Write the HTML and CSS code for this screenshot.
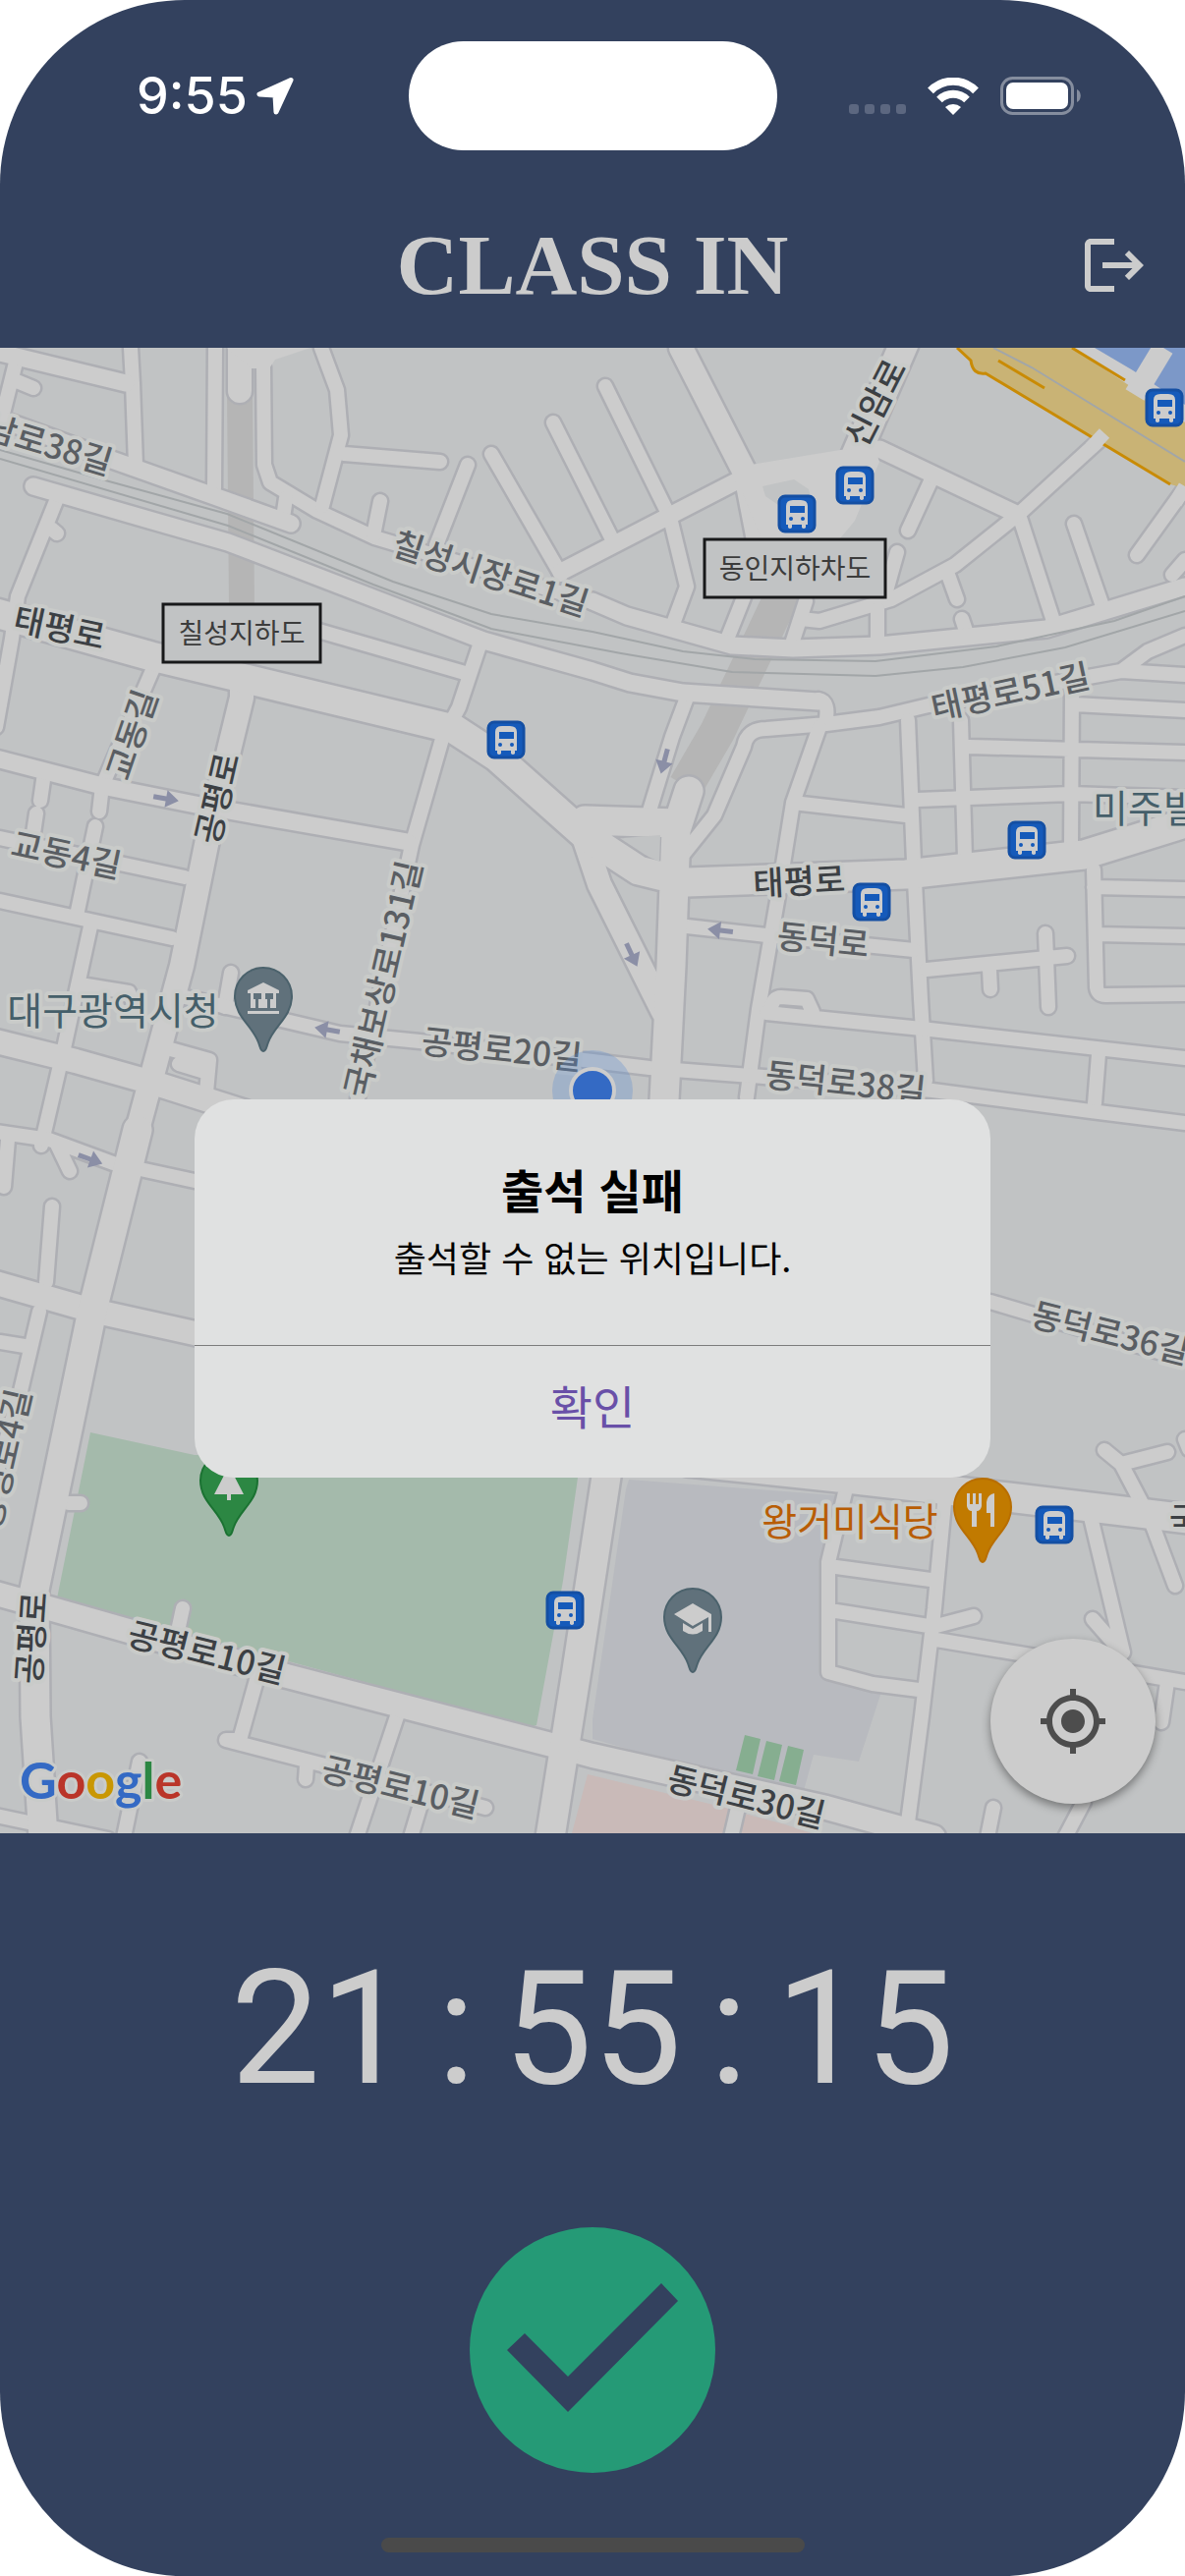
FILE: index.html
```html
<!DOCTYPE html>
<html lang="ko">
<head>
<meta charset="utf-8">
<meta name="viewport" content="width=device-width, initial-scale=1">
<title>CLASS IN</title>
<link rel="stylesheet" href="styles.css">
</head>
<body>
<div class="phone">
  <header class="header">
    <div class="status">
      <div class="status-left">
        <time class="status-time">9:55</time>
        <svg class="icon-location" viewBox="0 0 40 40" aria-hidden="true"><path d="M36 3.500L4 18L20 19L21 36Z"/></svg>
      </div>
      <div class="island"></div>
      <div class="status-right">
        <svg class="icon-signal" viewBox="0 0 58 10" aria-hidden="true"><rect width="10" height="10" rx="3"/><rect x="16" width="10" height="10" rx="3"/><rect x="32" width="10" height="10" rx="3"/><rect x="48" width="10" height="10" rx="3"/></svg>
        <svg class="icon-wifi" viewBox="0 0 52 38" aria-hidden="true"><path class="wave" d="M3 13.400A32 32 0 0 1 49 13.400"/><path class="wave" d="M12 22.500A20 20 0 0 1 40 22.500"/><path class="wave-dot" d="M26 38L18 30A12 12 0 0 1 34 30Z"/></svg>
        <svg class="icon-battery" viewBox="0 0 82 39" aria-hidden="true"><rect class="shell" x="1.500" y="1.500" width="72" height="36" rx="11"/><rect class="charge" x="6" y="6" width="63" height="27" rx="7"/><path class="nub" d="M78 13C83 15 83 24 78 26Z"/></svg>
      </div>
    </div>
    <div class="app-bar">
      <h1 class="brand">CLASS IN</h1>
      <button class="logout" type="button" aria-label="로그아웃"><svg viewBox="0 0 24 24"><path d="M17 7l-1.410 1.410L18.170 11H8v2h10.170l-2.580 2.580L17 17l5-5zM4 5h8V3H4c-1.100 0-2 .9-2 2v14c0 1.100.9 2 2 2h8v-2H4V5z"/></svg></button>
    </div>
  </header>

  <main class="map">
    <svg class="map-canvas" viewBox="0 354 1206 1512" role="img" aria-label="지도">
      <defs>
        <g id="bus">
          <rect class="bus-box" x="-18" y="-18" width="36" height="36" rx="6"/>
          <path class="bus-body" d="M-11 -8Q-11 -14 -4 -14H4Q11 -14 11 -8V11H9V14Q7 16 5 14V11H-5V14Q-7 16 -9 14V11H-11Z"/>
          <rect class="bus-glass" x="-7" y="-8" width="15" height="7"/>
          <circle class="bus-glass" cx="-6" cy="5" r="2"/><circle class="bus-glass" cx="6" cy="5" r="2"/>
        </g>
        <path id="pin" d="M0 -1C-3 -1 -3 -5 -5 -10C-11 -27 -29 -36 -29 -57A29 29 0 0 1 29 -57C29 -36 11 -27 5 -10C3 -5 3 -1 0 -1Z"/>
        <path id="arrow" d="M-13 -2.500H0V-9L13 0L0 9V2.500H-13Z"/>
        <g id="roads">
          <path class="r14" d="M17 365L2 425M17 388L34 395M133 354L135 390L138 473M219 354L218 497M268 373L269 473L275 491L323 520L381 547L603 613"/>
          <path class="r14" d="M291 507L288 527M57 510L18 607L12 650L-4 740M52 538L58 543M300 635L473 685M488 657L467 720L450 752L419 860L364 1118"/>
          <path class="r14" d="M156 680L104 800L101 826M97 841L79 927M92 943L65 1067L42 1166M45 787L41 815M37 828L33 855M0 853L188 893M0 917L175 955M88 1003L131 1010L140 1030M235 990L229 1025"/>
          <path class="r14" d="M327 354L343 397L347 443L328 515M350 462L448 470M387 510L380 545M476 473L444 555M500 462L571 585M563 430L622 547M616 393L682 527L699 597L685 635"/>
          <path class="r14" d="M947 490L924 540M1120 447L1037 523L972 575L907 610L834 632L815 630M913 562L899 612M965 585L974 610M979 630L984 645M1038 527L1072 632M1093 533L1122 617M1206 497L1157 565M1206 570L1193 585"/>
          <path class="r14" d="M757 608L741 648M820 612L807 652M893 620L893 650M699 710L684 750L658 835M757 760L727 830L695 870M757 760Q760 742 780 742L841 737L895 730L945 718L1141 683L1168 663L1206 647M1141 683L1206 687M833 712Q845 714 840 737"/>
          <path class="r14" d="M1093 717L1206 723M1091 705L1090 860M978 733L982 873M924 733L930 877L937 1017L942 1100M834 740L807 817L791 917L772 1027L760 1117M807 817L922 830M934 814L1090 808L1206 812M986 760L1206 766"/>
          <path class="r14" d="M699 943L780 952L930 967M943 987L1086 973M1064 950L1067 1025M1007 987L1008 1007M1113 885L1116 1005Q1117 1013 1125 1013L1206 1012M1113 903L1206 905M1117 951L1206 953M780 1031L938 1047L1206 1077M785 1027Q786 1015 795 1015L821 1017L827 1030M1118 1073L1114 1123"/>
          <path class="r14" d="M180 1013L346 1052L427 1060L603 1080L661 1087L765 1095L949 1110L1110 1131L1206 1143M170 1067L213 1079L210 1112M182 1083L205 1090M-4 1152L50 1160L115 1184L198 1202M58 1165L71 1192M8 1160L4 1208M53 1228L47 1305"/>
          <path class="r14" d="M40 1335L20 1420L-10 1520M0 1366L25 1370M186 1637L181 1660M70 1530L82 1530M261 1710L244 1771L230 1771L331 1797L494 1840M312 1797L311 1811M404 1747L363 1870M430 1830L418 1870M142 1793L126 1870M-4 1848L110 1872"/>
          <path class="r14" d="M861 1515L843 1590L843 1702L888 1714L935 1720M961 1530L951 1637L938 1747L922 1870M851 1595L947 1608M851 1640L945 1655M953 1655L991 1645M953 1669L1049 1685L1206 1712M1109 1540L1143 1682M1112 1648L1140 1680"/>
          <path class="r14" d="M1124 1476L1141 1490L1188 1478M1141 1490L1162 1530M1172 1550L1196 1614M1188 1712L1182 1753M1011 1840L1005 1870M1103 1834L1084 1870M1008 1325L1206 1384M751 1840L744 1870M1206 1465L1210 1475"/>
          <path class="r18" d="M-4 358L128 390M-4 425L111 467L218 505L296 533M34 495L155 530L232 552L492 652L603 683L641 695L695 705L833 714M571 582L753 488M895 457L1034 523M603 612L638 627L688 641L745 657L807 660L895 657L1065 640L1206 597M-4 772L104 800L204 820L415 857"/>
          <path class="r24" d="M693 354L759 483L772 550M246 697L246 710L212 850L185 983L158 1083L140 1150M-4 1060L77 1080L162 1104L250 1132M-4 1306L94 1334L198 1357L620 1450M-4 1622L50 1637L292 1706L565 1777L603 1787L841 1840L950 1870M590 840L610 900L675 1030M244 340L244 398"/>
          <path class="r30" d="M-4 624L154 668L246 690L462 742L505 770L595 850L650 886L699 898L922 890L1103 870L1206 838M920 350L868 470L835 548M701 805L688 845L683 983L676 1120L617 1503L587 1700L560 1870M140 1150L94 1334L35 1618L36 1747L44 1870M700 1488L853 1504L1026 1524L1210 1546M595 835L690 838"/>
        </g>
      </defs>
      <rect class="land" y="354" width="1206" height="1512"/>
      <path class="park" d="M92 1458L198 1481L590 1490L573 1609L546 1756L540 1758L58 1627Z"/>
      <path class="campus" d="M640 1506L850 1522L836 1590L836 1700L897 1722L874 1793L828 1786L816 1830L603 1770L603 1750L637 1516Z"/>
      <path class="pink" d="M598 1806L743 1841L736 1866H582ZM757 1846L799 1857L826 1866H753Z"/>
      <path class="court" d="M758 1766L774 1770L766 1806L749 1802ZM780 1772L796 1776L788 1812L771 1808ZM802 1777L818 1781L810 1817L793 1813Z"/>
      <path class="tunnel-wide" d="M799 600L730 745L698 800"/>
      <path class="tunnel" d="M244 400L246 617"/>
      <use class="casing" href="#roads"/>
      <use class="paving" href="#roads"/>
      <path class="plaza" d="M231 354H316L280 366L274 375H256ZM764 473L855 458L890 455L895 470L870 530L845 560H780L755 500Z"/>
      <path class="island-block" d="M776 495L808 488L823 498L826 510L800 520L792 514L779 505Z"/>
      <path class="island-block" d="M634 853L672 850L671 877L660 872Z"/>
      <path class="rail" d="M0 458L111 490L231 523L400 592L500 625L603 643L695 663L768 671L891 673L1014 658L1134 632L1206 607M0 467L232 535L380 595L500 640L632 665L745 684L891 688L980 679L1084 659L1206 622"/>
      <path class="platform" d="M1091 354H1130L1206 405V430Z"/>
      <path class="water" d="M1114 354H1206V412L1153 377Z"/>
      <path class="highway" d="M974 354L988 367Q990 382 1003 380L1191 493L1206 497V430L1091 354Z"/>
      <path class="highway-edge" d="M974 354L988 367Q990 382 1003 380L1191 493M1091 354L1145 387M1016 367L1063 395"/>
      <path class="rail" d="M1011 354L1050 374L1206 470"/>
      <path class="ramp" d="M1184 354L1155 402"/>
      <path class="ramp-narrow" d="M1124 441L1110 456M1206 495L1196 512"/>

      <g class="flow">
        <use href="#arrow" transform="translate(169 813) rotate(10)"/>
        <use href="#arrow" transform="translate(333 1048) rotate(190)"/>
        <use href="#arrow" transform="translate(676 775) rotate(105)"/>
        <use href="#arrow" transform="translate(733 947) rotate(187)"/>
        <use href="#arrow" transform="translate(643 972) rotate(65)"/>
        <use href="#arrow" transform="translate(92 1180) rotate(20)"/>
      </g>

      <g class="label">
        <text class="end" transform="translate(114 470) rotate(17)">남로38길</text>
        <text transform="translate(500 582) rotate(18)">칠성시장로1길</text>
        <text class="main" transform="translate(61 637) rotate(12)">태평로</text>
        <text transform="translate(132 747) rotate(-71)">교동길</text>
        <text class="main" transform="translate(219 812) rotate(-77)">공평로</text>
        <text transform="translate(68 868) rotate(12)">교동4길</text>
        <text transform="translate(388 996) rotate(-77)">국채보상로131길</text>
        <text transform="translate(511 1066) rotate(6)">공평로20길</text>
        <text class="main" transform="translate(889 409) rotate(-63)">신암로</text>
        <text transform="translate(1028 702) rotate(-12)">태평로51길</text>
        <text class="main" transform="translate(813 895) rotate(-3)">태평로</text>
        <text transform="translate(838 955) rotate(6)">동덕로</text>
        <text transform="translate(861 1100) rotate(6)">동덕로38길</text>
        <text class="start" transform="translate(1051 1335) rotate(14)">동덕로36길</text>
        <text class="main" transform="translate(760 1827) rotate(14)">동덕로30길</text>
        <text class="main" transform="translate(211 1680) rotate(14)">공평로10길</text>
        <text transform="translate(408 1817) rotate(14)">공평로10길</text>
        <text class="main" transform="translate(30 1667) rotate(-86)">공평로</text>
        <text class="end" transform="translate(18 1414) rotate(-77)">공평로4길</text>
        <text class="main start" transform="translate(1190 1544)">국</text>
      </g>
      <g class="place">
        <text transform="translate(115 1026)">대구광역시청</text>
        <text class="start" transform="translate(1112 820)">미주빌</text>
        <text class="food" transform="translate(865 1546)">왕거미식당</text>
      </g>
      <g class="sign">
        <rect x="166" y="615" width="160" height="59"/>
        <text x="246" y="643">칠성지하도</text>
        <rect x="717" y="549" width="184" height="59"/>
        <text x="809" y="577">동인지하차도</text>
      </g>

      <use href="#bus" transform="translate(515 753)"/>
      <use href="#bus" transform="translate(811 523)"/>
      <use href="#bus" transform="translate(870 494)"/>
      <use href="#bus" transform="translate(1185 415)"/>
      <use href="#bus" transform="translate(1045 855)"/>
      <use href="#bus" transform="translate(887 918)"/>
      <use href="#bus" transform="translate(575 1639)"/>
      <use href="#bus" transform="translate(1073 1552)"/>

      <g transform="translate(268 1071)">
        <use class="pin-civic" href="#pin"/>
        <path class="glyph" d="M-16 -63L0 -71L16 -63V-60H-16ZM-13 -60H13V-45H-13ZM-16 -42H16V-39H-16Z"/>
        <path class="cut" d="M-10 -60H-2V-54H-5V-45H-8V-54H-10ZM2 -60H10V-54H7V-45H4V-54H2Z"/>
      </g>
      <g transform="translate(705 1703)">
        <use class="pin-civic" href="#pin"/>
        <path class="glyph" d="M-19 -60L0 -71L19 -60V-42H16V-57L0 -48ZM-10 -51L0 -45L10 -51V-43Q0 -36 -10 -43Z"/>
      </g>
      <g transform="translate(1000 1591)">
        <use class="pin-food" href="#pin"/>
        <path class="glyph" d="M-16 -71H-13V-60H-10V-71H-7V-60H-4V-71H-1V-58Q-2 -53 -6 -53V-37H-11V-53Q-15 -53 -16 -58ZM12 -71V-37H8V-51H4V-62Q5 -70 12 -71Z"/>
      </g>
      <g transform="translate(233 1564)">
        <use class="pin-park" href="#pin"/>
        <path class="glyph" d="M0 -72L15 -43H2V-37H-2V-43H-15Z"/>
      </g>

      <circle class="me-halo" cx="603" cy="1110" r="41"/>
      <circle class="me-dot" cx="603" cy="1110" r="22"/>

      <text class="google" x="20" y="1831"><tspan class="g-blue">G</tspan><tspan class="g-red">o</tspan><tspan class="g-yellow">o</tspan><tspan class="g-blue">g</tspan><tspan class="g-green">l</tspan><tspan class="g-red">e</tspan></text>
    </svg>
    <button class="locate" type="button" aria-label="내 위치"><svg viewBox="0 0 24 24"><path d="M12 8c-2.210 0-4 1.790-4 4s1.790 4 4 4 4-1.790 4-4-1.790-4-4-4zm8.940 3c-.46-4.170-3.770-7.480-7.940-7.940V1h-2v2.060C6.830 3.520 3.520 6.830 3.060 11H1v2h2.060c.46 4.170 3.770 7.480 7.940 7.940V23h2v-2.060c4.170-.46 7.480-3.770 7.940-7.940H23v-2h-2.060zM12 19c-3.870 0-7-3.130-7-7s3.130-7 7-7 7 3.130 7 7-3.130 7-7 7z"/></svg></button>
  </main>

  <footer class="panel">
    <div class="clock" role="timer"><span>21</span><span>:</span><span>55</span><span>:</span><span>15</span></div>
    <button class="check" type="button" aria-label="출석"><svg viewBox="0 0 250 250"><path d="M38 125L56 108L100 152L195 57L212 75L100 188Z"/></svg></button>
    <div class="home-bar"></div>
  </footer>

  <div class="overlay">
    <section class="dialog" role="alertdialog" aria-labelledby="dialog-title" aria-describedby="dialog-text">
      <div class="dialog-body">
        <h2 class="dialog-title" id="dialog-title">출석 실패</h2>
        <p class="dialog-text" id="dialog-text">출석할 수 없는 위치입니다.</p>
      </div>
      <button class="dialog-button" type="button">확인</button>
    </section>
  </div>
</div>
</body>
</html>
```
FILE: styles.css
```css
* {
  box-sizing: border-box;
}

body {
  margin: 0;
  background: #ffffff;
  font-family: Inter, "Noto Sans CJK KR", sans-serif;
}

button {
  padding: 0;
  border: 0;
  background: none;
  font: inherit;
}

svg {
  display: block;
}

.phone {
  position: relative;
  display: flex;
  flex-direction: column;
  min-height: 100vh;
  overflow: hidden;
  border-radius: 188px;
  background: #33415e;
}

/* Header */
.header {
  display: flex;
  flex-direction: column;
  gap: 81px;
  padding: 42px 36px 48px;
}

.status,
.app-bar {
  display: grid;
  grid-template-columns: 1fr auto 1fr;
  align-items: center;
}

.status-left {
  display: flex;
  align-items: center;
  gap: 8px;
  padding-left: 103px;
}

.status-time {
  color: #ffffff;
  font-size: 52px;
  font-weight: 500;
  line-height: 60px;
}

.icon-location {
  width: 40px;
  height: 40px;
  fill: #ffffff;
  stroke: #ffffff;
  stroke-width: 5;
  stroke-linejoin: round;
}

.island {
  width: 375px;
  height: 111px;
  border-radius: 56px;
  background: #ffffff;
}

.status-right {
  display: flex;
  align-items: center;
  justify-content: flex-end;
  gap: 22px;
  padding-right: 70px;
}

.icon-signal {
  width: 58px;
  height: 10px;
  margin-top: 26px;
  fill: #5c6780;
}

.icon-wifi {
  width: 52px;
  height: 38px;
}

.wave {
  fill: none;
  stroke: #ffffff;
  stroke-width: 8;
}

.wave-dot,
.charge {
  fill: #ffffff;
}

.icon-battery {
  width: 82px;
  height: 39px;
}

.shell {
  fill: none;
  stroke: #858d9e;
  stroke-width: 3;
}

.nub {
  fill: #858d9e;
}

.brand {
  grid-column: 2;
  margin: 0;
  color: #cccccc;
  font-family: "Liberation Serif", serif;
  font-size: 87px;
  font-weight: 700;
  line-height: 72px;
}

.logout {
  justify-self: end;
}

.logout svg {
  width: 72px;
  height: 72px;
  fill: #cccccc;
}

/* Map */
.map {
  position: relative;
}

.map-canvas {
  width: 100%;
  height: auto;
}

.land,
.island-block {
  fill: #c1c3c4;
}

.park {
  fill: #a4baab;
}

.campus {
  fill: #b8babf;
}

.pink {
  fill: #c9bab8;
}

.court {
  fill: #86ae90;
}

.plaza,
.platform {
  fill: #cccccc;
}

.water {
  fill: #7c98c8;
}

.highway {
  fill: #c9b375;
}

.highway-edge {
  fill: none;
  stroke: #c98b05;
  stroke-width: 3;
}

.rail {
  fill: none;
  stroke: #a2a6a8;
  stroke-width: 2;
}

.tunnel,
.tunnel-wide {
  fill: none;
  stroke: #b5b5b5;
  stroke-width: 26;
}

.tunnel-wide {
  stroke-width: 36;
}

.ramp,
.ramp-narrow {
  fill: none;
  stroke: #cccccc;
  stroke-width: 22;
}

.ramp-narrow {
  stroke-width: 14;
}

.casing,
.paving {
  fill: none;
  stroke-linecap: round;
  stroke-linejoin: round;
}

.casing {
  --edge: 5px;
  stroke: #aeafb4;
}

.paving {
  --edge: 0px;
  stroke: #cccccc;
}

.r14 {
  stroke-width: calc(14px + var(--edge));
}

.r18 {
  stroke-width: calc(17px + var(--edge));
}

.r24 {
  stroke-width: calc(24px + var(--edge));
}

.r30 {
  stroke-width: calc(29px + var(--edge));
}

.flow {
  fill: #8b8fa6;
}

.label,
.place,
.sign {
  font-family: "Noto Sans CJK KR", sans-serif;
  text-anchor: middle;
  dominant-baseline: central;
}

.label,
.place {
  stroke: #c9cbc9;
  stroke-width: 8px;
  stroke-linejoin: round;
  paint-order: stroke;
}

.label {
  fill: #5a5e63;
  font-size: 34px;
  font-weight: 500;
}

.main {
  fill: #3c4044;
}

.start {
  text-anchor: start;
}

.end {
  text-anchor: end;
}

.place {
  fill: #455f6a;
  font-size: 39px;
  font-weight: 400;
}

.food {
  fill: #b85d04;
}

.sign {
  fill: #3c3c3c;
  font-size: 28px;
}

.sign rect {
  fill: #c1c3c4;
  stroke: #18191a;
  stroke-width: 3;
}

.bus-box {
  fill: #155aba;
  stroke: #144fa3;
  stroke-width: 3;
}

.bus-body,
.glyph {
  fill: #cccccc;
}

.bus-glass {
  fill: #155aba;
}

.pin-civic {
  fill: #60717b;
  stroke: #4b626c;
  stroke-width: 2;
}

.cut {
  fill: #60717b;
}

.pin-food {
  fill: #c17a00;
  stroke: #b86e00;
  stroke-width: 2;
}

.pin-park {
  fill: #2c8743;
  stroke: #1b7232;
  stroke-width: 2;
}

.me-halo {
  fill: #5b8bd0;
  fill-opacity: 0.3;
}

.me-dot {
  fill: #346ac4;
  stroke: #cccccc;
  stroke-width: 4;
}

.google {
  font-family: Lato, sans-serif;
  font-size: 52px;
  font-weight: 700;
  stroke: #c9cbc9;
  stroke-width: 6px;
  stroke-linejoin: round;
  paint-order: stroke;
}

.g-blue {
  fill: #346ac4;
}

.g-red {
  fill: #ba3529;
}

.g-yellow {
  fill: #c99703;
}

.g-green {
  fill: #2c8743;
}

.locate {
  position: absolute;
  right: 30px;
  bottom: 30px;
  display: grid;
  place-items: center;
  width: 168px;
  height: 168px;
  border-radius: 50%;
  background: #cccccc;
  box-shadow: 0 4px 10px rgba(0, 0, 0, 0.4);
}

.locate svg {
  width: 72px;
  height: 72px;
  fill: #4d4d4d;
}

/* Clock and attendance button */
.panel {
  display: flex;
  flex: 1;
  flex-direction: column;
  align-items: center;
  padding: 104px 36px 24px;
}

.clock {
  display: flex;
  gap: 28px;
  color: #cccccc;
  font-family: Roboto, sans-serif;
  font-size: 162px;
  line-height: 190px;
}

.check {
  width: 250px;
  height: 250px;
  margin-top: 107px;
  border-radius: 50%;
  background: #259a76;
}

.check path {
  fill: #33415e;
}

.home-bar {
  width: 431px;
  height: 15px;
  margin-top: auto;
  border-radius: 8px;
  background: #4a4a4a;
}

/* Alert dialog */
.overlay {
  position: absolute;
  inset: 0;
  display: grid;
  place-items: center;
}

.dialog {
  width: 90%;
  max-width: 810px;
  overflow: hidden;
  border-radius: 40px;
  background: #e0e1e1;
  font-family: "Noto Sans CJK KR", sans-serif;
  text-align: center;
}

.dialog-body {
  padding: 56px 40px;
  border-bottom: 1px solid #7c7c7c;
}

.dialog-title {
  margin: 0;
  font-size: 47px;
  font-weight: 700;
  line-height: 70px;
}

.dialog-text {
  margin: 0;
  font-size: 36px;
  line-height: 68px;
}

.dialog-button {
  width: 100%;
  padding-bottom: 14px;
  color: #6950a8;
  font-size: 47px;
  line-height: 120px;
}
```
